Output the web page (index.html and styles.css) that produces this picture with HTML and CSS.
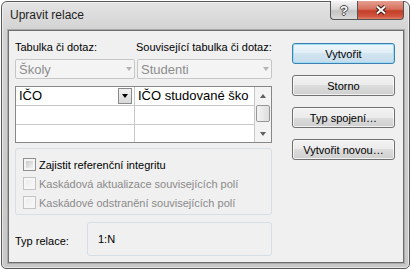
FILE: index.html
```html
<!DOCTYPE html>
<html lang="cs">
<head>
    <meta charset="UTF-8">
    <title>Upravit relace</title>
    <link rel="stylesheet" href="styles.css">
</head>
<body>
    <div class="window">
        <div class="titlebar">
            <span class="title">Upravit relace</span>
            <div class="caption">
                <div class="cap-btn help">?</div>
                <div class="cap-btn close">
                    <svg width="12" height="10" viewBox="0 0 12 10">
                        <path d="M2 1.5 L10 8.5 M10 1.5 L2 8.5" stroke="#3b1b14" stroke-width="4"/>
                        <path d="M2 1.5 L10 8.5 M10 1.5 L2 8.5" stroke="#fff" stroke-width="2"/>
                    </svg>
                </div>
            </div>
        </div>

        <div class="client">
            <div class="main">
                <div class="labels">
                    <span class="col-a">Tabulka či dotaz:</span>
                    <span>Související tabulka či dotaz:</span>
                </div>

                <div class="combos">
                    <div class="combo combo-a"><span>Školy</span><span class="combo-arrow"></span></div>
                    <div class="combo combo-b"><span>Studenti</span><span class="combo-arrow"></span></div>
                </div>

                <div class="sheet">
                    <div class="cells">
                        <div class="row">
                            <div class="cell cell-a">IČO <span class="drop-btn"><span class="tri-down"></span></span></div>
                            <div class="cell cell-b">IČO studované ško</div>
                        </div>
                        <div class="row">
                            <div class="cell cell-a"></div>
                            <div class="cell cell-b"></div>
                        </div>
                        <div class="row">
                            <div class="cell cell-a"></div>
                            <div class="cell cell-b"></div>
                        </div>
                    </div>
                    <div class="scrollbar">
                        <span class="sb-btn"><span class="sb-up"></span></span>
                        <span class="sb-thumb"></span>
                        <span class="sb-btn sb-last"><span class="sb-down"></span></span>
                    </div>
                </div>

                <div class="group">
                    <div class="check-row"><span class="check"></span>Zajistit referenční integritu</div>
                    <div class="check-row disabled"><span class="check"></span>Kaskádová aktualizace souvisejících polí</div>
                    <div class="check-row disabled"><span class="check"></span>Kaskádové odstranění souvisejících polí</div>
                </div>

                <div class="reltype">
                    <span class="rel-label">Typ relace:</span>
                    <div class="rel-box">1:N</div>
                </div>
            </div>

            <div class="actions">
                <div class="btn btn-default">Vytvořit</div>
                <div class="btn">Storno</div>
                <div class="btn">Typ spojení…</div>
                <div class="btn">Vytvořit novou…</div>
            </div>
        </div>
    </div>
</body>
</html>
```

FILE: styles.css
```css
* {
    box-sizing: border-box;
}
body {
    margin: 0;
    background-color: #fff;
    font-family: "Liberation Sans", Arial, sans-serif;
    font-size: 11px;
    color: #000;
}
.window {
    margin: 1px 0 0 1px;
    width: 409px;
    height: 268px;
    border: 1px solid #595959;
    border-radius: 6px 6px 5px 5px;
    background: linear-gradient(#e4e4e4, #d3d3d3 28px, #c8c8c8);
    box-shadow: inset 0 0 0 1px rgba(255, 255, 255, 0.55);
    display: flex;
    flex-direction: column;
}
.titlebar {
    height: 28px;
    display: flex;
    justify-content: space-between;
    align-items: flex-start;
    padding-left: 8px;
}
.title {
    font-size: 12px;
    line-height: 15px;
    padding-top: 6px;
    color: #1e1e1e;
}
.caption {
    display: flex;
    margin: -1px 5px 0 0;
}
.cap-btn {
    height: 19px;
    border: 1px solid #555;
    border-top: none;
    display: flex;
    align-items: center;
    justify-content: center;
}
.help {
    width: 27px;
    border-right: none;
    border-radius: 0 0 0 4px;
    background: linear-gradient(#f4f4f4, #dadada 45%, #c4c4c4 55%, #d9d9d9);
    color: #fff;
    font-weight: bold;
    font-size: 13px;
    text-shadow: 1px 0 #444, -1px 0 #444, 0 1px #444, 0 -1px #444;
}
.close {
    width: 47px;
    border-radius: 0 0 4px 0;
    background: linear-gradient(#e4a091 0%, #d6705c 45%, #c43d27 55%, #d0563f 85%, #e27f68 100%);
}

.client {
    flex: 1;
    margin: 0 5px 5px 6px;
    background-color: #f0f0f0;
    border: 1px solid #6f6f6f;
    box-shadow: 0 0 0 1px #a9a9a9;
    display: flex;
    padding: 9px 0 0 6px;
}
.main {
    width: 257px;
    display: flex;
    flex-direction: column;
}
.labels {
    display: flex;
    height: 14px;
    line-height: 14px;
}
.col-a {
    width: 121px;
}
.combos {
    display: flex;
    gap: 2px;
    margin-top: 5px;
}
.combo {
    height: 20px;
    border: 1px solid #c6c6c6;
    border-radius: 2px;
    background-color: #f4f4f4;
    color: #8d8d8d;
    font-size: 13px;
    display: flex;
    align-items: center;
    justify-content: space-between;
    padding: 0 2px 0 3px;
}
.combo-a {
    width: 120px;
}
.combo-b {
    width: 135px;
}
.combo-arrow {
    border-left: 3.5px solid transparent;
    border-right: 3.5px solid transparent;
    border-top: 4px solid #b4b4b4;
}

.sheet {
    margin-top: 7px;
    height: 57px;
    border: 1px solid #878787;
    background-color: #fff;
    display: flex;
}
.cells {
    flex: 1;
}
.row {
    display: flex;
    height: 19px;
    border-bottom: 1px solid #c8c8c8;
}
.row:last-child {
    height: 17px;
    border-bottom: none;
}
.cell {
    width: 119px;
    border-right: 1px solid #c8c8c8;
    font-size: 13px;
    line-height: 18px;
    padding-left: 3px;
    white-space: nowrap;
    overflow: hidden;
}
.cell-a {
    display: flex;
    align-items: center;
    justify-content: space-between;
}
.cell-b {
    flex: 1;
    border-right: none;
}
.drop-btn {
    width: 14px;
    height: 16px;
    margin-right: 2px;
    border: 1px solid #8b8b8b;
    background: linear-gradient(#f2f2f2, #d9d9d9);
    display: flex;
    align-items: center;
    justify-content: center;
}
.tri-down {
    border-left: 3.5px solid transparent;
    border-right: 3.5px solid transparent;
    border-top: 4px solid #000;
}
.scrollbar {
    width: 18px;
    border-left: 1px solid #c8c8c8;
    background-color: #f3f3f3;
    display: flex;
    flex-direction: column;
    align-items: center;
}
.sb-btn {
    height: 17px;
    display: flex;
    align-items: center;
    justify-content: center;
}
.sb-last {
    margin-top: auto;
}
.sb-up {
    border-left: 3.5px solid transparent;
    border-right: 3.5px solid transparent;
    border-bottom: 4px solid #606060;
}
.sb-down {
    border-left: 3.5px solid transparent;
    border-right: 3.5px solid transparent;
    border-top: 4px solid #606060;
}
.sb-thumb {
    width: 14px;
    height: 17px;
    margin-top: 1px;
    border: 1px solid #979797;
    border-radius: 2px;
    background: linear-gradient(to right, #f4f4f4, #dedede);
}

.group {
    margin-top: 5px;
    height: 67px;
    border: 1px solid #d5dfe5;
    border-radius: 3px;
    padding: 6px 0 2px 7px;
}
.check-row {
    height: 19px;
    display: flex;
    align-items: center;
}
.check {
    width: 13px;
    height: 13px;
    margin-right: 3px;
    border: 1px solid #8f8f8f;
    padding: 2px;
    background: linear-gradient(135deg, #c9c9c9, #f2f2f2) content-box, #f4f4f4;
}
.disabled {
    color: #8a8a8a;
}
.disabled .check {
    border-color: #c4c4c4;
    background: linear-gradient(135deg, #ececec, #f8f8f8) content-box, #f6f6f6;
}

.reltype {
    margin-top: 7px;
    display: flex;
    align-items: center;
}
.rel-label {
    width: 72px;
    padding-top: 3px;
}
.rel-box {
    flex: 1;
    height: 34px;
    border: 1px solid #d5dfe5;
    border-radius: 3px;
    padding-left: 10px;
    display: flex;
    align-items: center;
}

.actions {
    width: 103px;
    margin-left: 20px;
    padding-top: 3px;
    display: flex;
    flex-direction: column;
    gap: 11px;
}
.btn {
    height: 21px;
    border: 1px solid #707070;
    border-radius: 3px;
    background: linear-gradient(#f2f2f2, #ebebeb 50%, #dddddd 50%, #cfcfcf);
    box-shadow: inset 0 0 0 1px rgba(255, 255, 255, 0.7);
    display: flex;
    align-items: center;
    justify-content: center;
}
.btn-default {
    border-color: #3c7fb1;
    background: linear-gradient(#edf6fb, #e1eef6 50%, #d2e5f0 50%, #c5dceb);
    box-shadow: inset 0 0 0 1px #9fdcf6;
}
```
